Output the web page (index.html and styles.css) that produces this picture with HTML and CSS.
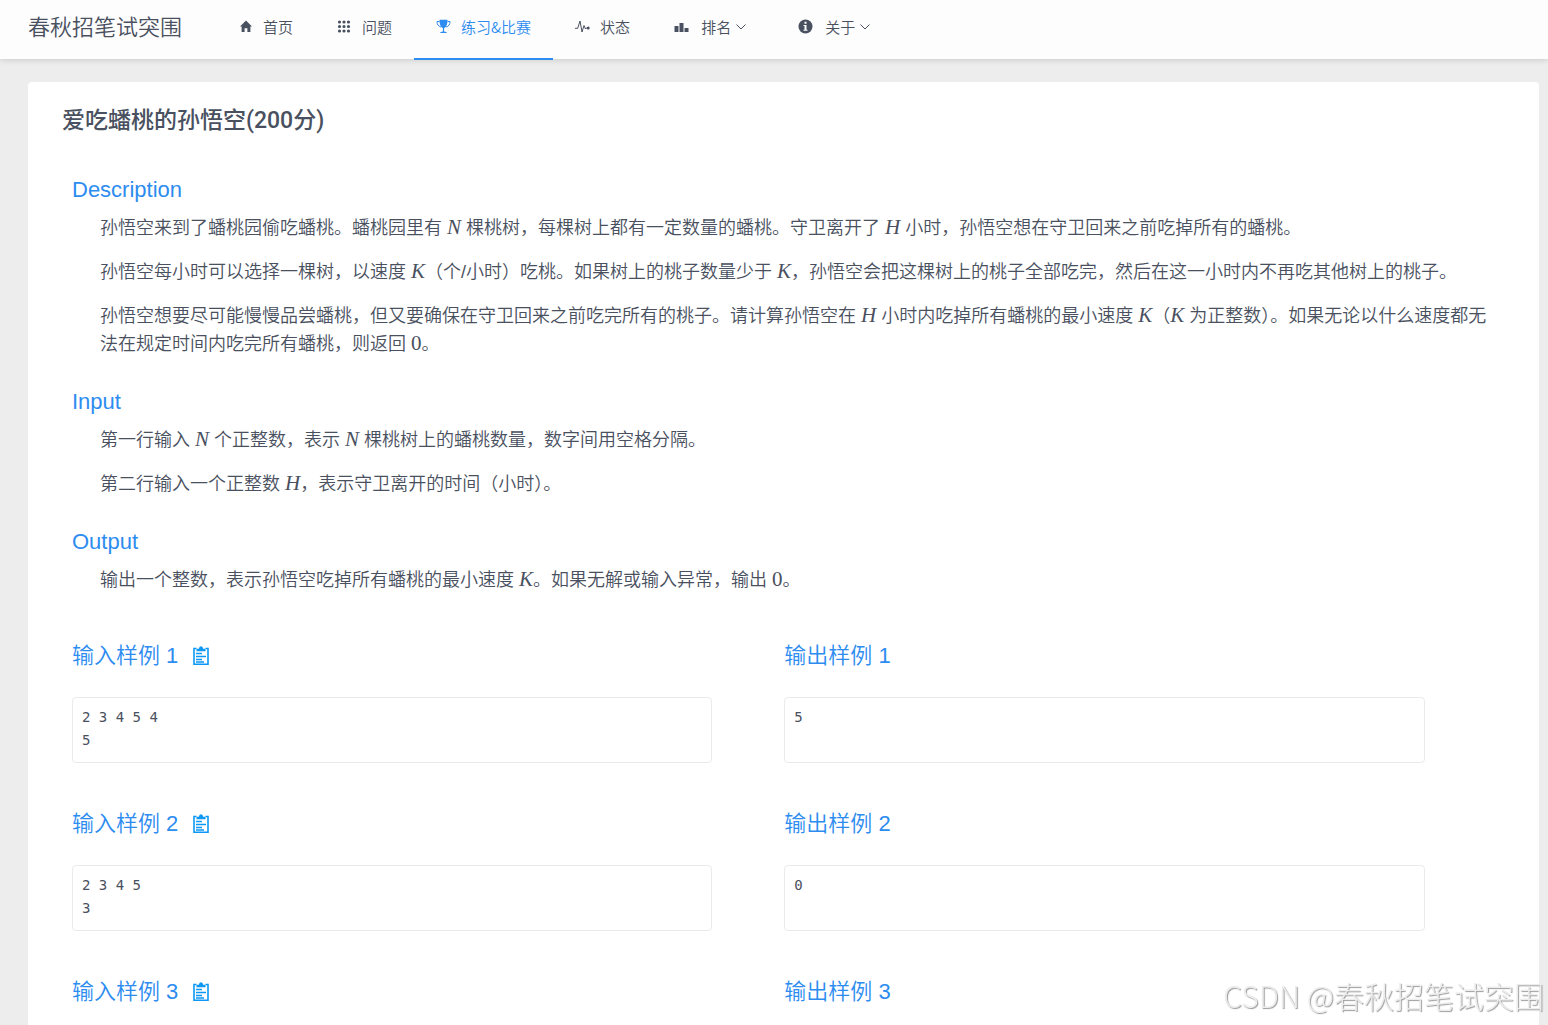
FILE: index.html
```html
<!DOCTYPE html>
<html lang="zh-CN">
<head>
    <meta charset="UTF-8">
    <meta name="viewport" content="width=device-width, initial-scale=1.0">
    <title>爱吃蟠桃的孙悟空</title>
    <link rel="stylesheet" href="styles.css">
</head>
<body>
    <svg class="sprite" aria-hidden="true">
        <symbol id="icon-clipboard" viewBox="0 0 18 20">
            <path d="M4.500 2.500H2V18.200h14V2.500h-2.500" fill="none" stroke="currentColor" stroke-width="1.600"/>
            <path d="M4.500 5.200V2.800h2.400C7 1 8 .2 9 .2s2 .8 2.100 2.600h2.400v2.400z" fill="currentColor"/>
            <path d="M4 7.500h6M4 10.500h10M4 13.500h6M4 16h8" stroke="currentColor" stroke-width="1.300"/>
        </symbol>
        <symbol id="icon-chevron" viewBox="0 0 12 12">
            <path d="M1.500 3.500l4.500 4.500 4.500-4.500" fill="none" stroke="currentColor"/>
        </symbol>
    </svg>

    <header class="header">
        <a class="brand" href="#">春秋招笔试突围</a>
        <nav class="menu">
            <a class="menu-item" href="#">
                <svg class="icon" viewBox="0 0 15 15"><path d="M8 1.500L2 7.600h1.600V13h3V9.300h2.800V13h3V7.600H14z" fill="currentColor"/></svg>
                首页
            </a>
            <a class="menu-item" href="#">
                <svg class="icon" viewBox="0 0 15 15">
                    <path d="M2.500 3h10M2.500 7.500h10M2.500 12h10" fill="none" stroke="currentColor" stroke-width="3.200" stroke-linecap="round" stroke-dasharray="0 4.500"/>
                </svg>
                问题
            </a>
            <a class="menu-item active" href="#">
                <svg class="icon" viewBox="0 0 15 15">
                    <path d="M3.500.8h8c0 4.500-.8 7-3.400 8.400v3.300c1.600.1 2.700.6 2.900 1.500H4c.2-.9 1.300-1.400 2.900-1.500V9.200C4.300 7.800 3.500 5.300 3.500.8z" fill="currentColor"/>
                    <path d="M3.500 2.500H1c0 3 1.200 4.800 4 5.500M11.500 2.500H14c0 3-1.200 4.800-4 5.500" fill="none" stroke="currentColor"/>
                </svg>
                练习&amp;比赛
            </a>
            <a class="menu-item" href="#">
                <svg class="icon" viewBox="0 0 15 15">
                    <path d="M0 9.300h2.700L5 2l2 11 2-6.500 1.500 3.500 1-1h1.500" fill="none" stroke="currentColor"/>
                    <circle cx="13.200" cy="9" r="1.500" fill="currentColor"/>
                </svg>
                状态
            </a>
            <a class="menu-item dropdown" href="#">
                <svg class="icon" viewBox="0 0 15 15"><path d="M.5 7H4.500v6H.5zM5.500 4h4v9h-4zM10.500 9h4v4h-4z" fill="currentColor"/></svg>
                <span>排名</span>
                <svg class="chevron"><use href="#icon-chevron"/></svg>
            </a>
            <a class="menu-item dropdown" href="#">
                <svg class="icon" viewBox="0 0 15 15">
                    <circle cx="7.500" cy="7.500" r="7" fill="currentColor"/>
                    <path d="M6.500 2.800h2v2h-2zM5.500 6h3v4.800h1v1h-4v-1h1V7h-1z" fill="#fdfdfd"/>
                </svg>
                <span>关于</span>
                <svg class="chevron"><use href="#icon-chevron"/></svg>
            </a>
        </nav>
    </header>

    <main class="panel">
        <h1 class="problem-title">爱吃蟠桃的孙悟空(200分)</h1>

        <section class="section">
            <h2 class="title">Description</h2>
            <div class="content">
                <p>孙悟空来到了蟠桃园偷吃蟠桃。蟠桃园里有 <i class="math">N</i> 棵桃树，每棵树上都有一定数量的蟠桃。守卫离开了 <i class="math">H</i> 小时，孙悟空想在守卫回来之前吃掉所有的蟠桃。</p>
                <p>孙悟空每小时可以选择一棵树，以速度 <i class="math">K</i>（个/小时）吃桃。如果树上的桃子数量少于 <i class="math">K</i>，孙悟空会把这棵树上的桃子全部吃完，然后在这一小时内不再吃其他树上的桃子。</p>
                <p>孙悟空想要尽可能慢慢品尝蟠桃，但又要确保在守卫回来之前吃完所有的桃子。请计算孙悟空在 <i class="math">H</i> 小时内吃掉所有蟠桃的最小速度 <i class="math">K</i>（<i class="math">K</i> 为正整数）。如果无论以什么速度都无法在规定时间内吃完所有蟠桃，则返回 <span class="math">0</span>。</p>
            </div>
        </section>

        <section class="section">
            <h2 class="title">Input</h2>
            <div class="content">
                <p>第一行输入 <i class="math">N</i> 个正整数，表示 <i class="math">N</i> 棵桃树上的蟠桃数量，数字间用空格分隔。</p>
                <p>第二行输入一个正整数 <i class="math">H</i>，表示守卫离开的时间（小时）。</p>
            </div>
        </section>

        <section class="section">
            <h2 class="title">Output</h2>
            <div class="content">
                <p>输出一个整数，表示孙悟空吃掉所有蟠桃的最小速度 <i class="math">K</i>。如果无解或输入异常，输出 <span class="math">0</span>。</p>
            </div>
        </section>

        <div class="samples">
            <div class="sample">
                <h2 class="title">输入样例 1 <button class="copy" type="button" aria-label="复制"><svg><use href="#icon-clipboard"/></svg></button></h2>
                <pre>2 3 4 5 4
5</pre>
            </div>
            <div class="sample">
                <h2 class="title">输出样例 1</h2>
                <pre>5</pre>
            </div>
            <div class="sample">
                <h2 class="title">输入样例 2 <button class="copy" type="button" aria-label="复制"><svg><use href="#icon-clipboard"/></svg></button></h2>
                <pre>2 3 4 5
3</pre>
            </div>
            <div class="sample">
                <h2 class="title">输出样例 2</h2>
                <pre>0</pre>
            </div>
            <div class="sample">
                <h2 class="title">输入样例 3 <button class="copy" type="button" aria-label="复制"><svg><use href="#icon-clipboard"/></svg></button></h2>
            </div>
            <div class="sample">
                <h2 class="title">输出样例 3</h2>
            </div>
        </div>
    </main>

    <div class="watermark">CSDN @春秋招笔试突围</div>
</body>
</html>
```
FILE: styles.css
```css
* {
    box-sizing: border-box;
}
body {
    margin: 0;
    background-color: #ededed;
    color: #495060;
    font-family: "Liberation Sans", "Noto Sans CJK SC", sans-serif;
    font-size: 15px;
    font-weight: 350;
}
.sprite {
    display: none;
}
.header {
    display: flex;
    height: 59px;
    padding-left: 28px;
    background-color: #fdfdfd;
    box-shadow: 0 1px 6px rgba(0, 0, 0, 0.15);
    font-family: "Noto Sans CJK SC", sans-serif;
}
.brand {
    margin-right: 34px;
    color: #495060;
    font-size: 22px;
    line-height: 50px;
    text-decoration: none;
    white-space: nowrap;
}
.menu {
    display: flex;
    height: 60px;
}
.menu-item {
    display: flex;
    align-items: center;
    gap: 10px;
    padding: 0 22px 5px;
    border-bottom: 2px solid transparent;
    color: #495060;
    text-decoration: none;
    white-space: nowrap;
}
.menu-item.active {
    border-bottom-color: #2d8cf0;
    color: #2d8cf0;
}
.menu-item.dropdown {
    gap: 12px;
    margin-right: 7px;
}
.icon {
    width: 15px;
    height: 15px;
}
.chevron {
    width: 12px;
    height: 12px;
    margin-left: -8px;
}
.panel {
    min-height: calc(100vh - 82px);
    margin: 23px 9px 0 28px;
    padding: 21px 34px 0;
    border-radius: 4px;
    background-color: #fff;
}
.problem-title {
    margin: 0 0 31px;
    font-family: Roboto, "Noto Sans CJK SC", sans-serif;
    font-size: 23px;
    font-weight: 500;
    line-height: 36px;
}
.section {
    padding: 0 10px;
    margin-bottom: 24px;
}
.title {
    display: flex;
    align-items: center;
    gap: 14px;
    margin: 0;
    color: #2d8cf0;
    font-size: 22px;
    font-weight: 350;
    line-height: 39px;
}
.content {
    padding: 5px 4px 0 28px;
    font-size: 18px;
    line-height: 28px;
}
.content p {
    margin: 0 0 16px;
}
.math {
    font-family: "Liberation Serif", serif;
    font-size: 21px;
    line-height: 1;
}
.samples {
    display: grid;
    grid-template-columns: 45% 45%;
    column-gap: 72px;
    margin-top: 42px;
    padding: 0 10px;
}
.sample {
    margin-bottom: 41px;
}
.sample pre {
    min-height: 66px;
    margin: 22px 0 0;
    padding: 8px 9px;
    border: 1px solid #e9eaec;
    border-radius: 4px;
    font-family: "DejaVu Sans Mono", monospace;
    font-size: 14px;
    line-height: 23px;
}
.copy {
    padding: 0;
    border: 0;
    background: none;
    color: #0d97f7;
    cursor: pointer;
}
.copy svg {
    display: block;
    width: 18px;
    height: 20px;
}
.watermark {
    position: fixed;
    right: 4px;
    bottom: 8px;
    color: #ececec;
    font-family: "Noto Sans CJK SC", sans-serif;
    font-size: 30px;
    font-weight: 300;
    line-height: 44px;
    text-shadow: 1px 1px 1px #999;
}
```
